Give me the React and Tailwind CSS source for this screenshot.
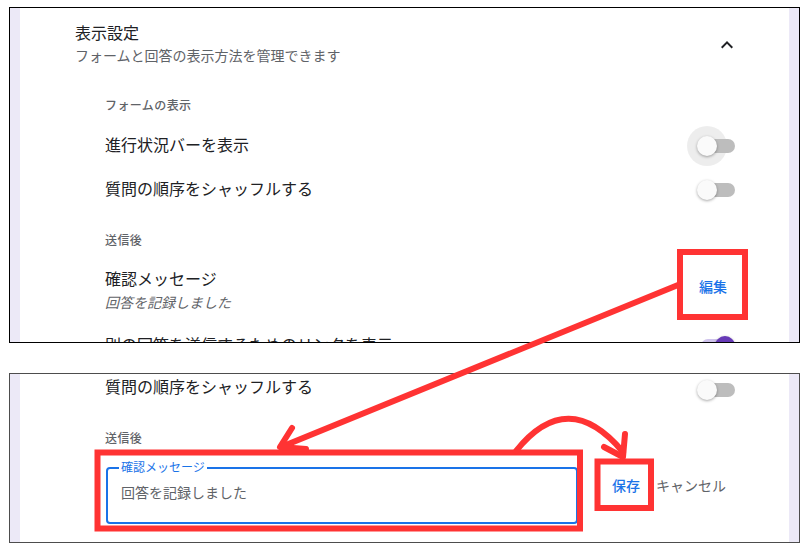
import clsx from 'clsx';

function Toggle({ on, halo, className }) {
  return (
    <div className={clsx('relative w-[38px] h-[20px] shrink-0', className)}>
      {halo && <div className="absolute left-[-10px] top-[-10px] w-[40px] h-[40px] rounded-full bg-black/[0.07]" />}
      <div
        className={clsx(
          'absolute left-[4px] right-0 top-[3px] h-[14px] rounded-full',
          on ? 'bg-[#cfc3ec]' : 'bg-[#bdbdbd]'
        )}
      />
      <div
        className={clsx(
          'absolute top-0 w-[20px] h-[20px] rounded-full shadow-[0_1px_3px_rgba(0,0,0,0.35)]',
          on ? 'right-0 bg-[#673ab7]' : 'left-0 bg-[#fafafa]'
        )}
      />
    </div>
  );
}

function Stripe() {
  return <div className="w-[10px] shrink-0 bg-[#ece9f7]" />;
}

function SectionLabel({ children, className }) {
  return (
    <div
      className={clsx(
        'flex items-end pl-[85px] text-[12px] leading-[16px] tracking-[0.4px] font-medium text-[#5f6368]',
        className
      )}
    >
      {children}
    </div>
  );
}

function SwitchRow({ label, on, halo, toggleClass }) {
  return (
    <div className="h-[44px] shrink-0 flex items-center justify-between pl-[85px] pr-[54px]">
      <span className="text-[16px] leading-[24px] text-[#202124]">{label}</span>
      <Toggle on={on} halo={halo} className={toggleClass} />
    </div>
  );
}

export default function App() {
  return (
    <div className="relative w-[806px] h-[550px] overflow-hidden bg-white pt-[7px] pl-[9px] font-['Roboto','Noto_Sans_CJK_JP',sans-serif]">
      {/* Before: settings card */}
      <div className="w-[791px] h-[336px] border border-black flex overflow-hidden">
        <Stripe />
        <div className="flex-1 flex flex-col">
          {/* Header */}
          <div className="h-[73px] shrink-0 flex items-center justify-between pl-[55px] pr-[50px]">
            <div>
              <p className="text-[16px] leading-[22px] text-[#202124]">表示設定</p>
              <p className="mt-[1px] text-[14px] leading-[20px] text-[#5f6368]">
                フォームと回答の表示方法を管理できます
              </p>
            </div>
            <svg width="24" height="24" viewBox="0 0 24 24" fill="#202124">
              <path d="M7.41 15.41 12 10.83l4.59 4.58L18 14l-6-6-6 6z" />
            </svg>
          </div>

          <SectionLabel className="h-[43px] shrink-0 pb-[10px]">フォームの表示</SectionLabel>
          <SwitchRow label="進行状況バーを表示" halo />
          <SwitchRow label="質問の順序をシャッフルする" />

          <SectionLabel className="h-[47px] shrink-0 pb-[10px]">送信後</SectionLabel>
          <div className="shrink-0 flex items-center justify-between pt-[10px] pb-[11px] pl-[85px] pr-[54px]">
            <div>
              <p className="text-[16px] leading-[22px] text-[#202124]">確認メッセージ</p>
              <p className="mt-[2px] text-[14px] leading-[20px] italic text-[#5f6368]">回答を記録しました</p>
            </div>
            <button className="h-[36px] px-2 mb-[8px] text-[14px] font-medium text-[#1a73e8]">編集</button>
          </div>
          <SwitchRow label="別の回答を送信するためのリンクを表示" on />
        </div>
        <Stripe />
      </div>

      {/* After: editing state */}
      <div className="mt-[30px] w-[791px] h-[170px] border border-[#4d4d4d] flex overflow-hidden">
        <Stripe />
        <div className="flex-1 flex flex-col">
          <div className="-mt-[8px]">
            <SwitchRow label="質問の順序をシャッフルする" toggleClass="mt-[4px]" />
          </div>
          <SectionLabel className="h-[50px] shrink-0 pb-[13px]">送信後</SectionLabel>
          <div className="flex items-start pl-[86px]">
            <fieldset className="w-[472px] h-[64px] shrink-0 border-2 border-[#1a73e8] rounded-[4px] px-[11px]">
              <legend className="px-[2px] text-[12px] leading-[16px] text-[#1a73e8]">確認メッセージ</legend>
              <div className="pt-[7px] pl-[2px] text-[14px] leading-[20px] text-[#5f6368]">回答を記録しました</div>
            </fieldset>
            <div className="ml-[26px] mt-[8px] flex">
              <button className="h-[36px] px-2 text-[14px] font-medium text-[#1a73e8]">保存</button>
              <button className="h-[36px] px-2 text-[14px] text-[#5f6368]">キャンセル</button>
            </div>
          </div>
        </div>
        <Stripe />
      </div>

      {/* Red annotations */}
      <svg
        className="absolute left-0 top-0 pointer-events-none"
        width="806"
        height="550"
        viewBox="0 0 806 550"
        fill="none"
        stroke="#ff3333"
        strokeWidth="6"
      >
        <rect x="680" y="252" width="65" height="65" />
        <rect x="97.5" y="452.5" width="482.5" height="76" />
        <rect x="597.5" y="461.5" width="53.5" height="46.5" />
        <path d="M678 285 L281 447" strokeLinecap="round" />
        <path d="M292 428 L280 447 L306 449" strokeLinecap="round" strokeLinejoin="round" />
        <path d="M516 451 Q568 386 623 452" strokeLinecap="round" />
        <path d="M604 447 L623 457 L625 434" strokeLinecap="round" strokeLinejoin="round" />
      </svg>
    </div>
  );
}
